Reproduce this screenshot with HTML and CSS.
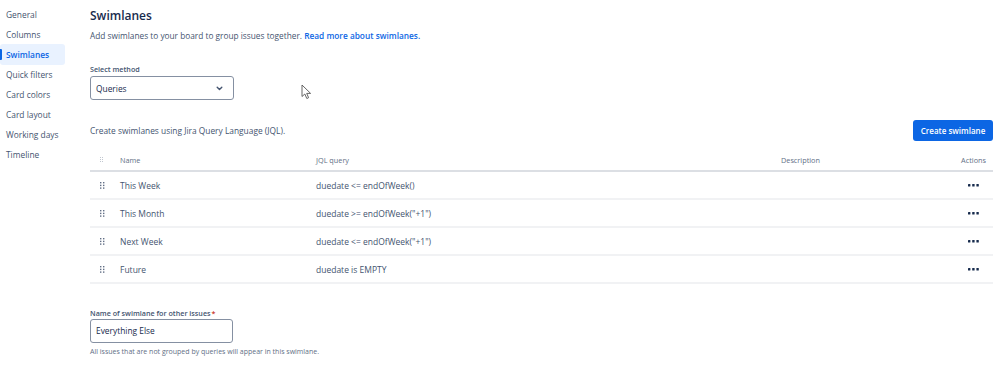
FILE: index.html
```html
<!DOCTYPE html>
<html lang="en">
<head>
  <meta charset="UTF-8" />
  <title>Board settings - Swimlanes</title>
  <link rel="stylesheet" href="styles.css">
</head>
<body>

  <div class="page">
    <!-- Settings navigation -->
    <nav class="sidebar">
      <a class="nav-item" href="#">General</a>
      <a class="nav-item" href="#">Columns</a>
      <a class="nav-item active" href="#">Swimlanes</a>
      <a class="nav-item" href="#">Quick filters</a>
      <a class="nav-item" href="#">Card colors</a>
      <a class="nav-item" href="#">Card layout</a>
      <a class="nav-item" href="#">Working days</a>
      <a class="nav-item" href="#">Timeline</a>
    </nav>

    <main class="content">
      <h1>Swimlanes</h1>
      <p class="intro">Add swimlanes to your board to group issues together. <a href="#">Read more about swimlanes.</a></p>

      <label class="field-label" for="method">Select method</label>
      <div class="select">
        <span>Queries</span>
        <svg class="chevron" width="7" height="5" viewBox="0 0 7 5"><path d="M1.2 1.3 L3.5 3.6 L5.8 1.3" fill="none" stroke="#44546f" stroke-width="1.4" stroke-linecap="round" stroke-linejoin="round"/></svg>
      </div>

      <div class="toolbar">
        <span>Create swimlanes using Jira Query Language (JQL).</span>
        <button class="btn-primary">Create swimlane</button>
      </div>

      <div class="table">
        <div class="row head">
          <div class="cell drag">
            <svg width="4" height="6" viewBox="0 0 4 6"><g fill="#c1c7d0"><rect x="0" y="0" width="1" height="1"/><rect x="2" y="0" width="1" height="1"/><rect x="0" y="2" width="1" height="1"/><rect x="2" y="2" width="1" height="1"/><rect x="0" y="4" width="1" height="1"/><rect x="2" y="4" width="1" height="1"/></g></svg>
          </div>
          <div class="cell name">Name</div>
          <div class="cell jql">JQL query</div>
          <div class="cell desc">Description</div>
          <div class="cell actions">Actions</div>
        </div>
      </div>

      <div class="other">
        <label class="field-label" for="other">Name of swimlane for other issues<span class="req">*</span></label>
        <div class="text-input">Everything Else</div>
        <p class="help">All issues that are not grouped by queries will appear in this swimlane.</p>
      </div>
    </main>
  </div>

  <!-- mouse pointer -->
  <svg class="cursor" width="12" height="16" viewBox="0 0 12 16"><path d="M1 1 L1 12.5 L3.8 10 L5.8 14.5 L7.6 13.7 L5.7 9.4 L9.6 9.4 Z" fill="#fff" stroke="#555" stroke-width="0.9" stroke-linejoin="round"/></svg>

  <script>
    const swimlanes = [
      { name: "This Week", jql: "duedate <= endOfWeek()" },
      { name: "This Month", jql: "duedate >= endOfWeek(\"+1\")" },
      { name: "Next Week", jql: "duedate <= endOfWeek(\"+1\")" },
      { name: "Future", jql: "duedate is EMPTY" }
    ];

    const grip = '<svg width="5" height="7" viewBox="0 0 5 7"><g fill="#626f86"><rect x="0" y="0" width="1.4" height="1.4"/><rect x="3" y="0" width="1.4" height="1.4"/><rect x="0" y="2.7" width="1.4" height="1.4"/><rect x="3" y="2.7" width="1.4" height="1.4"/><rect x="0" y="5.4" width="1.4" height="1.4"/><rect x="3" y="5.4" width="1.4" height="1.4"/></g></svg>';
    const more = '<svg width="11" height="3" viewBox="0 0 11 3"><g fill="#172b4d"><rect x="0" y="0" width="2.4" height="2.4" rx="0.5"/><rect x="4.2" y="0" width="2.4" height="2.4" rx="0.5"/><rect x="8.4" y="0" width="2.4" height="2.4" rx="0.5"/></g></svg>';

    const table = document.querySelector(".table");
    swimlanes.forEach(function (lane) {
      const row = document.createElement("div");
      row.className = "row";
      row.innerHTML = `
        <div class="cell drag">${grip}</div>
        <div class="cell name"></div>
        <div class="cell jql"></div>
        <div class="cell desc"></div>
        <div class="cell actions">${more}</div>
      `;
      row.querySelector(".name").textContent = lane.name;
      row.querySelector(".jql").textContent = lane.jql;
      table.appendChild(row);
    });
  </script>

</body>
</html>
```

FILE: styles.css
```css
body {
  margin: 0;
  font-family: "Open Sans", "Noto Sans", Arial, sans-serif;
  color: #172b4d;
  background: #fff;
  position: relative;
}

.page {
  display: flex;
  align-items: flex-start;
}

/* Sidebar */
.sidebar {
  width: 65px;
  padding-top: 5px;
  display: flex;
  flex-direction: column;
  flex-shrink: 0;
}

.nav-item {
  display: block;
  height: 20px;
  line-height: 20px;
  padding-left: 6px;
  font-size: 8.4px;
  color: #44546f;
  text-decoration: none;
  border-radius: 3px;
  white-space: nowrap;
}

.nav-item.active {
  height: 21px;
  margin-top: -1px;
  line-height: 21px;
  background: #e9f2ff;
  color: #0c66e4;
  font-weight: 600;
  position: relative;
}

.nav-item.active::before {
  content: "";
  position: absolute;
  left: 0;
  top: 5px;
  width: 2px;
  height: 11px;
  background: #0c66e4;
  border-radius: 0 1px 1px 0;
}

/* Main */
.content {
  flex: 1;
  margin-left: 25px;
  margin-right: 6px;
  padding-top: 6px;
}

h1 {
  margin: 0;
  font-size: 12px;
  line-height: 20px;
  font-weight: 600;
  color: #172b4d;
}

.intro {
  margin: 3px 0 0;
  font-size: 8.3px;
  line-height: 14px;
  color: #44546f;
}

.intro a {
  color: #0c66e4;
  text-decoration: none;
  font-weight: 600;
}

.field-label {
  display: block;
  margin-top: 20px;
  font-size: 7.2px;
  line-height: 12px;
  font-weight: 600;
  color: #44546f;
}

.select {
  width: 144px;
  height: 24px;
  margin-top: 1px;
  box-sizing: border-box;
  border: 1px solid #8590a2;
  border-radius: 3px;
  display: flex;
  align-items: center;
  justify-content: space-between;
  padding: 0 10px 0 5px;
  font-size: 8.4px;
  color: #172b4d;
}

.chevron {
  display: block;
}

.toolbar {
  margin-top: 20px;
  height: 21px;
  display: flex;
  align-items: center;
  justify-content: space-between;
  font-size: 8.4px;
  color: #44546f;
}

.btn-primary {
  height: 21px;
  width: 80px;
  padding: 0;
  border: none;
  border-radius: 3px;
  background: #0c66e4;
  color: #fff;
  font-family: inherit;
  font-size: 8px;
  font-weight: 600;
}

/* Swimlane table */
.table {
  margin-top: 9px;
}

.row {
  display: grid;
  grid-template-columns: 24px 196px 465px 1fr 60px;
  height: 26px;
  align-items: center;
  border-bottom: 2px solid #f1f2f4;
  font-size: 8.5px;
  color: #44546f;
}

.row.head {
  height: 20px;
  border-bottom: 2px solid #dcdfe4;
  font-size: 7.3px;
  color: #626f86;
}

.cell {
  padding-left: 6px;
  white-space: nowrap;
}

.cell.drag {
  padding-left: 10px;
  display: flex;
  align-items: center;
}

.cell.drag svg {
  display: block;
}

.cell.actions {
  padding: 0 7px 0 0;
  text-align: right;
  display: flex;
  justify-content: flex-end;
}

.row:not(.head) .cell.actions {
  padding-right: 14px;
}

.cell.actions svg {
  display: block;
}

/* Other issues field */
.other .field-label {
  margin-top: 23px;
}

.req {
  color: #c9372c;
  margin-left: 1px;
}

.text-input {
  width: 143px;
  height: 24px;
  box-sizing: border-box;
  border: 1px solid #8590a2;
  border-radius: 3px;
  padding-left: 5px;
  line-height: 22px;
  font-size: 8.4px;
  color: #172b4d;
}

.help {
  margin: 3px 0 0;
  font-size: 7px;
  line-height: 12px;
  color: #626f86;
}

.cursor {
  position: absolute;
  left: 301px;
  top: 84px;
}
```
